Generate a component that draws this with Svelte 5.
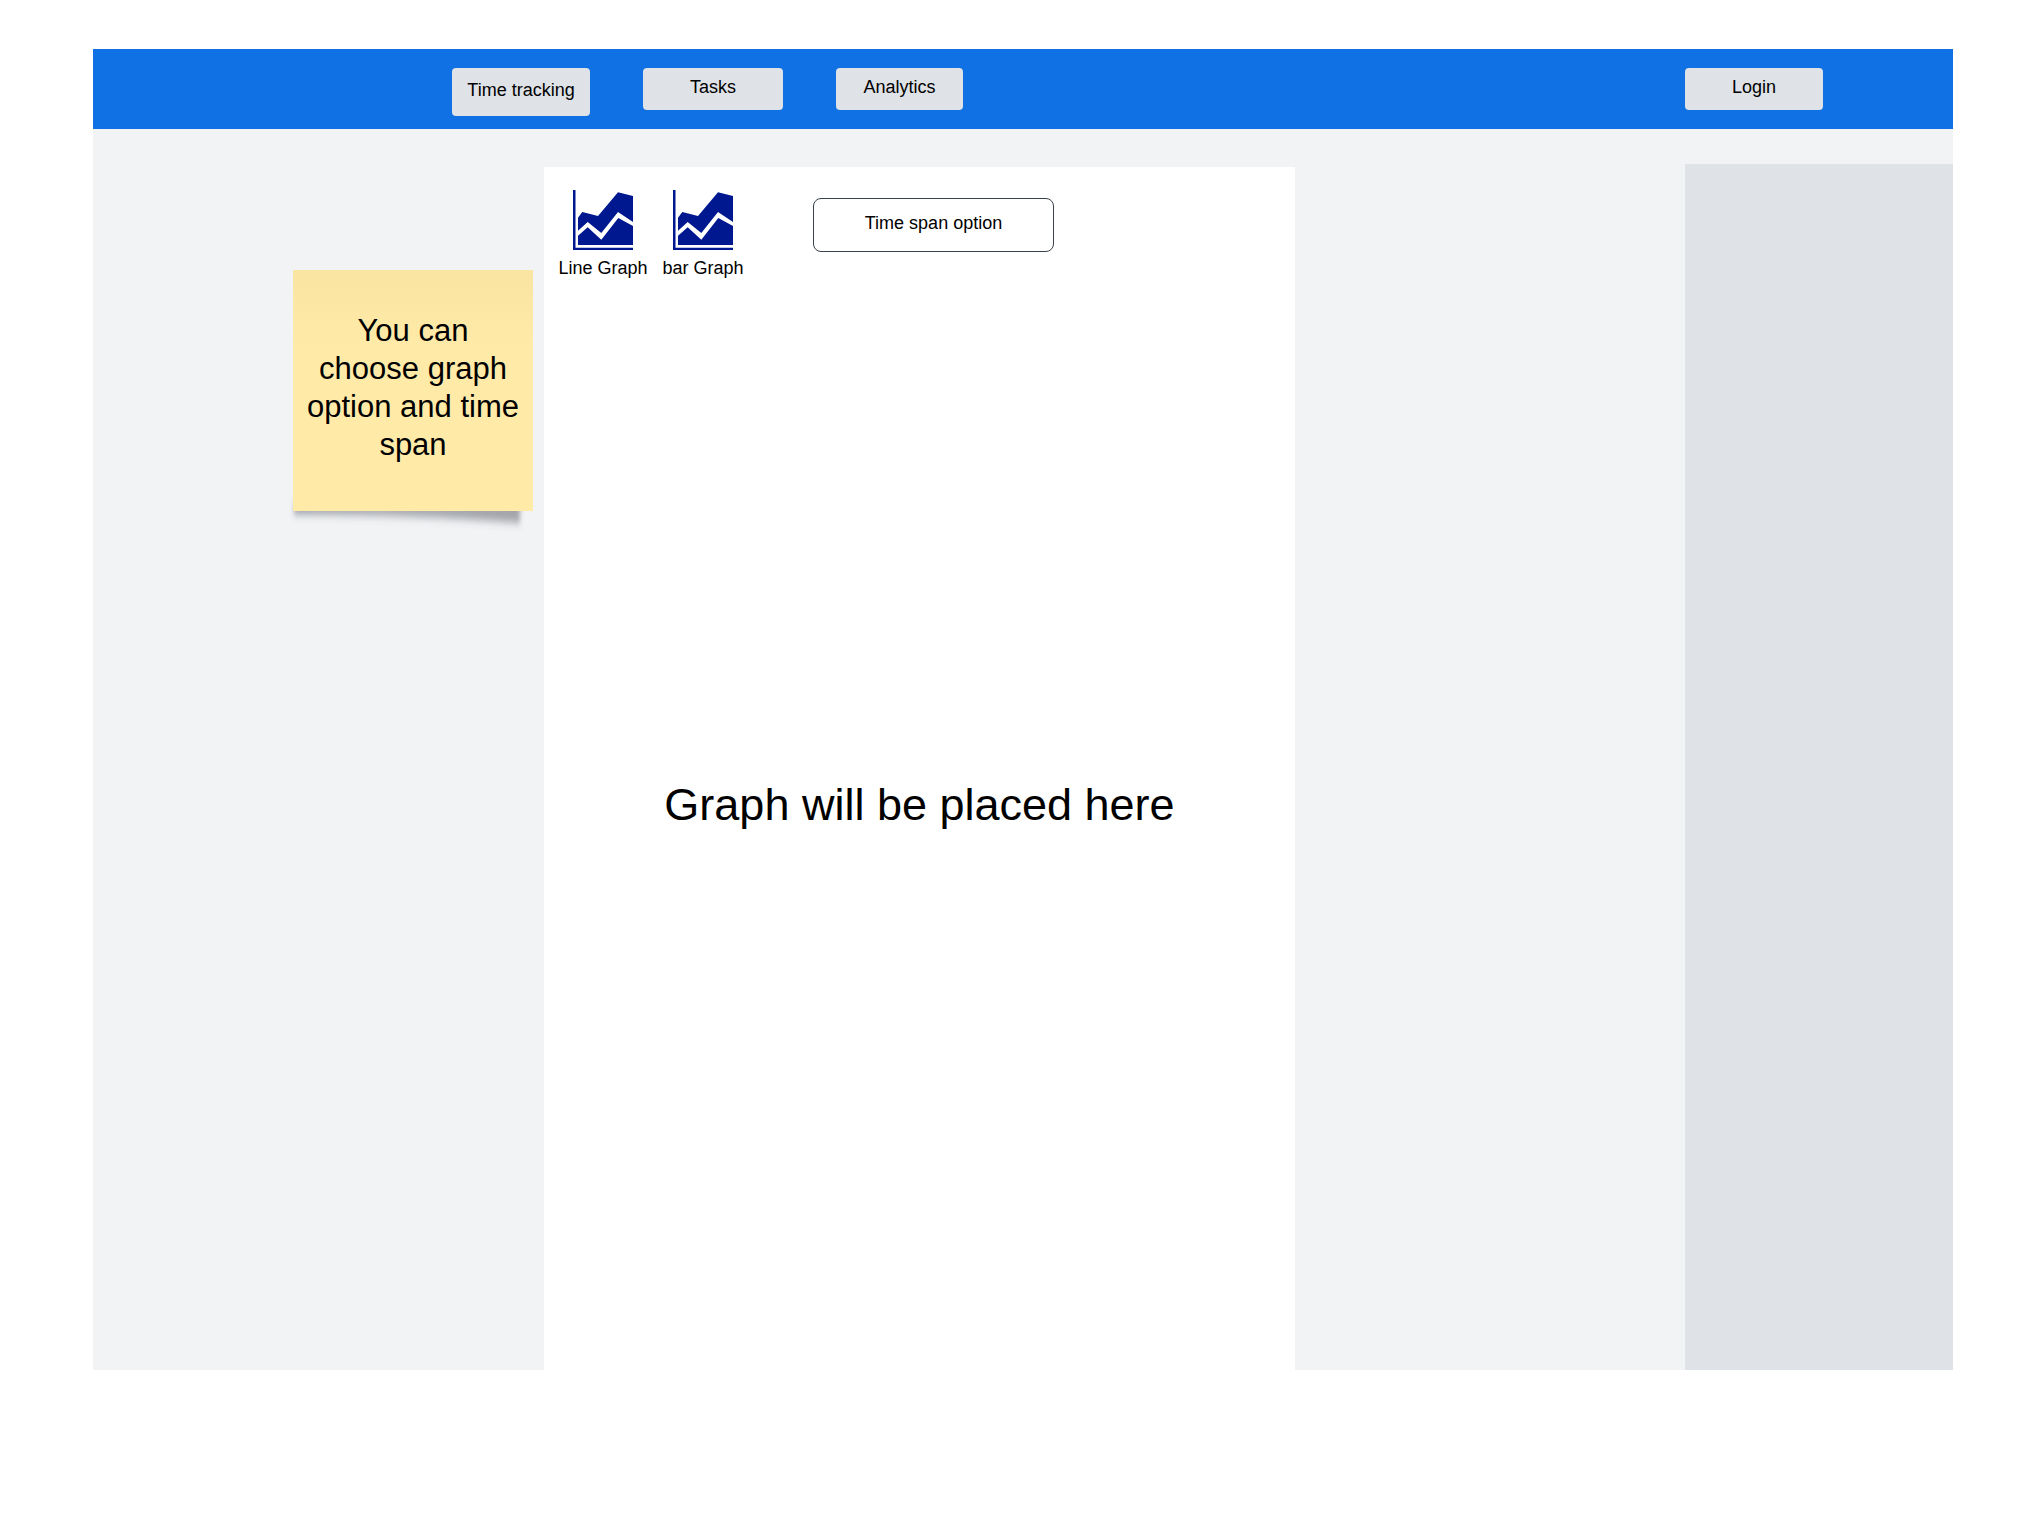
<script>
  const sections = ['Time tracking', 'Tasks', 'Analytics'];
  const graphs = ['Line Graph', 'bar Graph'];
</script>

<div class="page">
  <div class="frame">
    <header>
      <nav aria-label="Main">
        {#each sections as name, i}
          <button class="pill" class:current={i === 0} class:narrow={i === 2}>{name}</button>
        {/each}
      </nav>
      <button class="pill login">Login</button>
    </header>

    <div class="content">
      <div class="notes">
        <div class="sticky">
          <svg class="shadow" viewBox="0 0 260 70" aria-hidden="true">
            <defs>
              <linearGradient id="fade" x1="0" x2="1" y1="0" y2="0">
                <stop offset="0" stop-color="#5d5f6b" stop-opacity="0.6" />
                <stop offset="0.4" stop-color="#5d5f66" stop-opacity="0.5" />
                <stop offset="1" stop-color="#55565c" stop-opacity="0.5" />
              </linearGradient>
              <filter id="soft" x="-10%" y="-60%" width="120%" height="220%">
                <feGaussianBlur stdDeviation="2 4" />
              </filter>
            </defs>
            <path d="M12 24H238V44Q140 36 12 35Z" fill="url(#fade)" filter="url(#soft)" />
          </svg>
          <p>You can choose graph option and time span</p>
        </div>
      </div>

      <main>
        <div class="toolbar">
          {#each graphs as name}
            <button class="graph">
              <svg viewBox="0 0 60 60" aria-hidden="true">
                <path d="M0 0H2.5V57.8H60V60H0Z" />
                <path d="M5 27.7L9.3 22L25 26L45 2.3L60 6V32L45 22L28.3 43L14.7 32L5 40.7Z" />
                <path d="M5 45.7L14.7 37.3L28.3 49.7L45.3 28L60 36V55H5Z" />
              </svg>
              <span>{name}</span>
            </button>
          {/each}
          <button class="span-option">Time span option</button>
        </div>
        <h1>Graph will be placed here</h1>
      </main>

      <aside aria-label="Side panel"></aside>
    </div>
  </div>
</div>

<style>
  :global(body) {
    background: #fff;
  }
  .page {
    box-sizing: border-box;
    min-height: 100vh;
    display: flex;
    padding: 49px 64px 162px 93px;
    font-family: 'Liberation Sans', Arial, sans-serif;
    font-size: 18px;
    line-height: 22px;
    color: #000;
  }
  .frame {
    flex: 1;
    display: flex;
    flex-direction: column;
    background: #f1f3f5;
  }
  header {
    display: grid;
    grid-template-columns: 359fr 1233fr 268fr;
    height: 80px;
    align-items: start;
    background: #1071e5;
  }
  nav {
    grid-column: 2;
    display: flex;
    align-items: flex-start;
    gap: 53px;
    padding-top: 19px;
  }
  button {
    font: inherit;
    color: inherit;
    border: 0;
    margin: 0;
    padding: 0;
    background: none;
    cursor: pointer;
  }
  .pill {
    width: 140px;
    height: 42px;
    padding-bottom: 4px;
    border-radius: 4px;
    background: #dfe2e7;
  }
  .current {
    width: 138px;
    height: 48px;
  }
  .narrow {
    width: 127px;
  }
  .login {
    width: 138px;
    margin-top: 19px;
  }
  .content {
    flex: 1;
    display: grid;
    grid-template-columns: 451fr 751fr 390fr 268fr;
  }
  .notes {
    display: flex;
    justify-content: flex-end;
    align-items: flex-start;
    padding: 141px 11px 0 0;
  }
  .sticky {
    position: relative;
    z-index: 0;
    box-sizing: border-box;
    width: 240px;
    min-height: 241px;
    padding: 42px 12px;
  }
  .sticky::before {
    content: '';
    position: absolute;
    inset: 0;
    z-index: -1;
    background: linear-gradient(#f9e4a2, #ffeaa8 32%);
  }
  .shadow {
    position: absolute;
    left: -11px;
    top: 209px;
    width: 260px;
    height: 70px;
    z-index: -2;
  }
  .sticky p {
    margin: 0;
    font-size: 31px;
    line-height: 38px;
    text-align: center;
  }
  main {
    display: flex;
    flex-direction: column;
    margin-top: 38px;
    background: #fff;
  }
  .toolbar {
    display: flex;
    align-items: flex-start;
    padding: 23px 15px 0;
    gap: 12px;
  }
  .graph {
    width: 88px;
    display: flex;
    flex-direction: column;
    align-items: center;
    gap: 7px;
    white-space: nowrap;
  }
  .graph svg {
    width: 60px;
    height: 60px;
    fill: #00188f;
  }
  .span-option {
    width: 241px;
    height: 54px;
    margin: 8px 0 0 54px;
    padding-bottom: 4px;
    border: 1px solid #3a414a;
    border-radius: 8px;
  }
  h1 {
    margin: auto;
    padding-bottom: 40px;
    font-size: 45px;
    line-height: 54px;
    font-weight: 400;
    text-align: center;
  }
  aside {
    grid-column: 4;
    margin-top: 35px;
    background: #dfe2e7;
  }
</style>
